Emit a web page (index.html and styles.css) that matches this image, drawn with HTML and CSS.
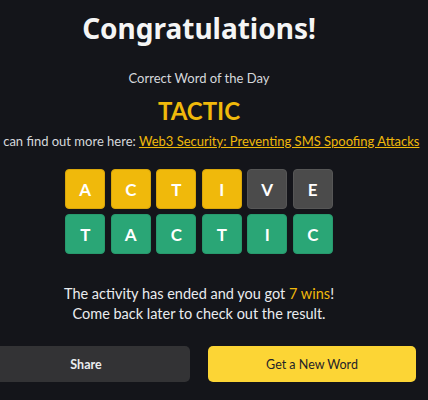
FILE: index.html
```html
<!DOCTYPE html>
<html lang="en">
<head>
  <meta charset="UTF-8">
  <meta name="viewport" content="width=device-width, initial-scale=1.0">
  <title>Word of the Day - Result</title>
  <link rel="stylesheet" href="styles.css">
</head>
<body>
  <main class="result">
    <h1 class="title">Congratulations!</h1>

    <p class="label">Correct Word of the Day</p>
    <p class="answer">TACTIC</p>
    <p class="more">You can find out more here: <a href="#">Web3 Security: Preventing SMS Spoofing Attacks</a></p>

    <!-- Tabuleiro com as tentativas -->
    <div class="board">
      <div class="row">
        <span class="tile present">A</span>
        <span class="tile present">C</span>
        <span class="tile present">T</span>
        <span class="tile present">I</span>
        <span class="tile absent">V</span>
        <span class="tile absent">E</span>
      </div>
      <div class="row">
        <span class="tile correct">T</span>
        <span class="tile correct">A</span>
        <span class="tile correct">C</span>
        <span class="tile correct">T</span>
        <span class="tile correct">I</span>
        <span class="tile correct">C</span>
      </div>
    </div>

    <p class="status">The activity has ended and you got <span class="wins">7 wins</span>!<br>Come back later to check out the result.</p>

    <div class="actions">
      <button type="button" class="btn share">Share</button>
      <button type="button" class="btn new-word">Get a New Word</button>
    </div>
  </main>
</body>
</html>
```

FILE: styles.css
```css
/* Estilos gerais */
body {
  margin: 0;
  padding: 0;
  background-color: #14151a;
  color: #eaecef;
  font-family: Lato, Arial, sans-serif;
  overflow: hidden;
}

.result {
  width: 434px;
  margin-left: -18px;
  padding-top: 6px;
  text-align: center;
}

.title {
  margin: 0;
  font-family: "Noto Sans", Arial, sans-serif;
  font-size: 28px;
  font-weight: 700;
  line-height: 44px;
  color: #f5f5f5;
}

.label {
  margin: 18px 0 0;
  font-size: 13px;
  line-height: 20px;
  color: #d6d8dc;
}

.answer {
  margin: 8px 0 0;
  font-size: 24px;
  font-weight: 700;
  line-height: 30px;
  color: #f0b90b;
}

.more {
  margin: 5px -10px 0;
  font-size: 13px;
  line-height: 20px;
  white-space: nowrap;
  color: #d6d8dc;
}

.more a {
  color: #f0b90b;
}

.board {
  display: flex;
  flex-direction: column;
  align-items: center;
  gap: 5px;
  margin-top: 18px;
}

.row {
  display: flex;
  gap: 5.5px;
}

.tile {
  display: flex;
  align-items: center;
  justify-content: center;
  width: 40px;
  height: 40px;
  box-sizing: border-box;
  border-radius: 4px;
  font-size: 17px;
  font-weight: 700;
  color: #fff;
}

.present {
  background-color: #f0b90b;
  border: 1px solid #d9a60a;
}

.absent {
  background-color: #4b4b4b;
  border: 1px solid #565656;
}

.correct {
  background-color: #2aa676;
  border: 1px solid #279a6d;
}

.status {
  margin: 30px 0 0;
  font-size: 14.5px;
  line-height: 20px;
  color: #eaecef;
}

.wins {
  color: #f0b90b;
}

.actions {
  display: flex;
  gap: 18px;
  margin-top: 22px;
}

.btn {
  flex: 1;
  height: 36px;
  border: none;
  border-radius: 5px;
  font-family: Lato, Arial, sans-serif;
  font-size: 12.5px;
  cursor: pointer;
}

.share {
  background-color: #333335;
  color: #eaecef;
  font-weight: 700;
}

.new-word {
  background-color: #fcd535;
  color: #1e2329;
  font-weight: 400;
}
```
